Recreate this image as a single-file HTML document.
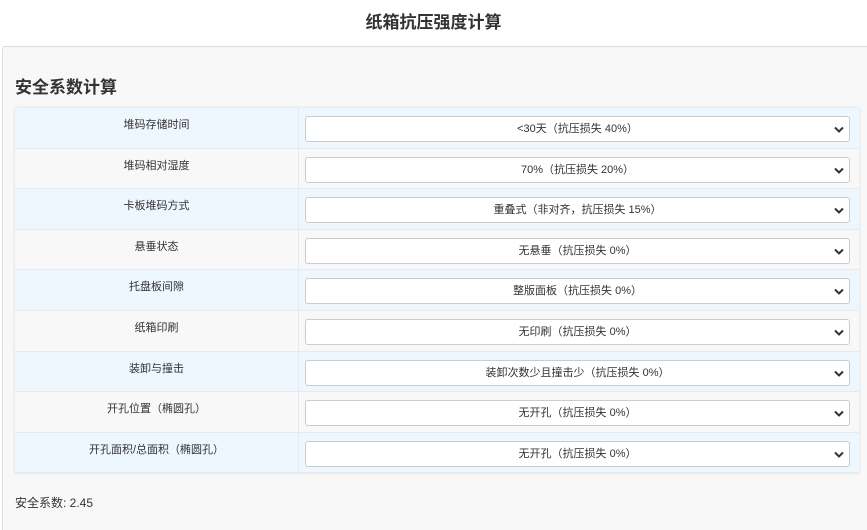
<!DOCTYPE html>
<html><head><meta charset="utf-8"><style>
*{box-sizing:border-box;margin:0;padding:0}
html,body{width:867px;height:530px;overflow:hidden}
body{background:#fff;font-family:"Liberation Sans","Noto Sans CJK SC",sans-serif;color:#333;position:relative}
h1{position:absolute;top:8px;left:0;width:867px;text-align:center;font-size:17px;font-weight:bold;color:#333}
.panel{position:absolute;left:2px;top:46px;width:880px;height:484px;background:#f8f8f8;border:1px solid #ddd;border-bottom:none;border-radius:3px 3px 0 0}
h2{position:absolute;left:12px;top:26px;font-size:17px;font-weight:bold;color:#333}
.tbl{position:absolute;left:12px;top:61px;width:844px;box-shadow:0 0 3px rgba(0,0,0,.12)}
.row{height:40.6px;display:flex;border-bottom:1px solid #e6e9ee}
.row:nth-child(odd){background:#eef6fe}
.row:nth-child(even){background:#f8f8f8}
.lab{width:284px;border-right:1px solid #e6e9ee;text-align:center;font-size:11px;padding-top:8px;color:#333}
.sel{position:relative;margin:8px 0 0 6px;width:545px;height:26px;background:#fff;border:1px solid #ccc;border-radius:3px;text-align:center;font-size:11px;line-height:24px;color:#333}
.sel svg{position:absolute;right:5px;top:9px}
.res{position:absolute;left:12px;top:447px;font-size:12px;color:#333}
</style></head><body>
<h1>纸箱抗压强度计算</h1>
<div class="panel">
<h2>安全系数计算</h2>
<div class="tbl">
<div class="row"><div class="lab">堆码存储时间</div><div class="sel">&lt;30天（抗压损失 40%）<svg width="10" height="7" viewBox="0 0 10 7"><path d="M1 1.5L5 5.5L9 1.5" stroke="#333" stroke-width="2" fill="none"/></svg></div></div>
<div class="row"><div class="lab">堆码相对湿度</div><div class="sel">70%（抗压损失 20%）<svg width="10" height="7" viewBox="0 0 10 7"><path d="M1 1.5L5 5.5L9 1.5" stroke="#333" stroke-width="2" fill="none"/></svg></div></div>
<div class="row"><div class="lab">卡板堆码方式</div><div class="sel">重叠式（非对齐，抗压损失 15%）<svg width="10" height="7" viewBox="0 0 10 7"><path d="M1 1.5L5 5.5L9 1.5" stroke="#333" stroke-width="2" fill="none"/></svg></div></div>
<div class="row"><div class="lab">悬垂状态</div><div class="sel">无悬垂（抗压损失 0%）<svg width="10" height="7" viewBox="0 0 10 7"><path d="M1 1.5L5 5.5L9 1.5" stroke="#333" stroke-width="2" fill="none"/></svg></div></div>
<div class="row"><div class="lab">托盘板间隙</div><div class="sel">整版面板（抗压损失 0%）<svg width="10" height="7" viewBox="0 0 10 7"><path d="M1 1.5L5 5.5L9 1.5" stroke="#333" stroke-width="2" fill="none"/></svg></div></div>
<div class="row"><div class="lab">纸箱印刷</div><div class="sel">无印刷（抗压损失 0%）<svg width="10" height="7" viewBox="0 0 10 7"><path d="M1 1.5L5 5.5L9 1.5" stroke="#333" stroke-width="2" fill="none"/></svg></div></div>
<div class="row"><div class="lab">装卸与撞击</div><div class="sel">装卸次数少且撞击少（抗压损失 0%）<svg width="10" height="7" viewBox="0 0 10 7"><path d="M1 1.5L5 5.5L9 1.5" stroke="#333" stroke-width="2" fill="none"/></svg></div></div>
<div class="row"><div class="lab">开孔位置（椭圆孔）</div><div class="sel">无开孔（抗压损失 0%）<svg width="10" height="7" viewBox="0 0 10 7"><path d="M1 1.5L5 5.5L9 1.5" stroke="#333" stroke-width="2" fill="none"/></svg></div></div>
<div class="row"><div class="lab">开孔面积/总面积（椭圆孔）</div><div class="sel">无开孔（抗压损失 0%）<svg width="10" height="7" viewBox="0 0 10 7"><path d="M1 1.5L5 5.5L9 1.5" stroke="#333" stroke-width="2" fill="none"/></svg></div></div>
</div>
<div class="res">安全系数: 2.45</div>
</div>
</body></html>
